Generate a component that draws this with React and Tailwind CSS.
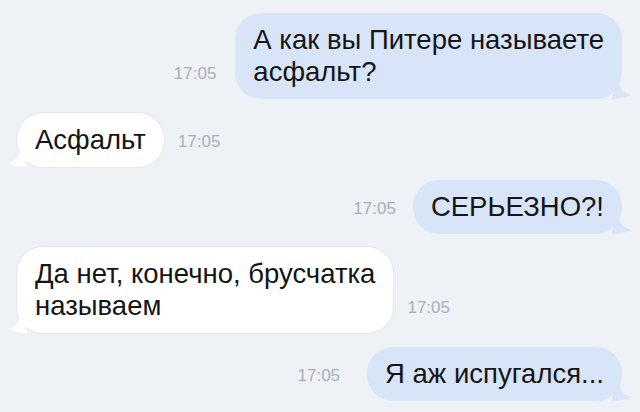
import React from 'react';

const FONT = { fontFamily: '"Liberation Sans", Arial, sans-serif' };

function Tail({ side }) {
  // little iOS-style tail at the bottom corner of a bubble
  if (side === 'right') {
    return (
      <svg className="absolute -right-[9px] bottom-0" width="20" height="20" viewBox="0 0 20 20">
        <path d="M0 0 C2 8 4 14 0 20 C7 20 14 19 20 16 C12 14 8 9 8 0 Z" fill="#d8e5f8" />
      </svg>
    );
  }
  return (
    <svg className="absolute -left-[9px] bottom-0" width="20" height="20" viewBox="0 0 20 20">
      <path d="M20 0 C18 8 16 14 20 20 C13 20 6 19 0 16 C8 14 12 9 12 0 Z" fill="#ffffff" />
    </svg>
  );
}

function Out({ time, children, className = '', gap = 'gap-[19px]' }) {
  return (
    <div className={`flex items-end justify-end pr-[18px] ${gap} ${className}`}>
      <span className="mb-[16px] text-[17px] leading-[18px] text-[#a9b0b9]">{time}</span>
      <div className="relative rounded-[26px] bg-[#d8e5f8] px-[18px] py-[11px] text-[27.5px] leading-[32px] text-[#151515]">
        <Tail side="right" />
        <span className="relative">{children}</span>
      </div>
    </div>
  );
}

function In({ time, children, className = '' }) {
  return (
    <div className={`flex items-end gap-[14px] pl-[17px] ${className}`}>
      <div className="relative rounded-[26px] bg-white px-[18px] py-[11px] text-[27.5px] leading-[32px] text-[#151515] shadow-[0_0_0_1px_#e3e7ed]">
        <Tail side="left" />
        <span className="relative">{children}</span>
      </div>
      <span className="mb-[16px] text-[17px] leading-[18px] text-[#a9b0b9]">{time}</span>
    </div>
  );
}

export default function App() {
  return (
    <div className="flex h-[412px] w-[640px] flex-col overflow-hidden bg-[#eef1f6] pt-[13px]" style={FONT}>
      <Out time="17:05">
        А как вы Питере называете
        <br />
        асфальт?
      </Out>
      <In time="17:05" className="mt-[14px]">Асфальт</In>
      <Out time="17:05" className="mt-[13px]" gap="gap-[17px]">СЕРЬЕЗНО?!</Out>
      <In time="17:05" className="mt-[13px]">
        Да нет, конечно, брусчатка
        <br />
        называем
      </In>
      <Out time="17:05" className="mt-[14px]" gap="gap-[27px]">Я аж испугался...</Out>
    </div>
  );
}
